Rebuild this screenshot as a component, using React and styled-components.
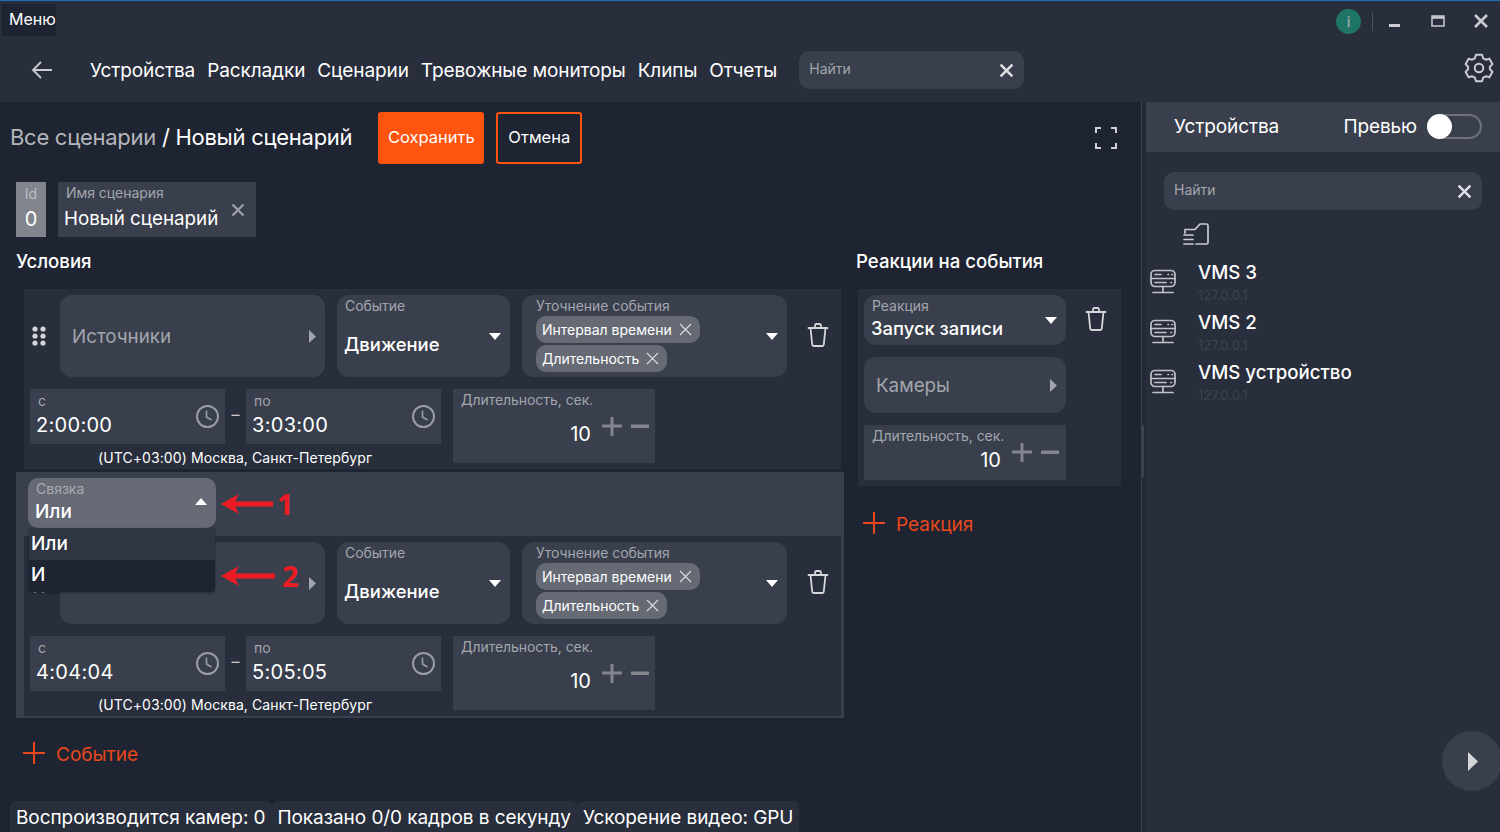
import React from "react";
import styled, { createGlobalStyle } from "styled-components";

const GlobalStyle = createGlobalStyle`
  html, body {
    margin: 0;
    padding: 0;
    height: 100%;
    overflow: hidden;
    background: #1e2431;
  }
  * {
    box-sizing: border-box;
  }
  body {
    font-family: "Inter", "Liberation Sans", sans-serif;
    color: #fff;
  }
`;

const Page = styled.div`
  width: 1500px;
  height: 832px;
  display: flex;
  flex-direction: column;
  overflow: hidden;
  background: #1e2431;
`;

const TopBar = styled.header`
  height: 102px;
  flex: none;
  background: #282e3b;
  border-top: 1px solid #1b6fb5;
  display: flex;
  flex-direction: column;
`;

const TitleRow = styled.div`
  height: 35px;
  padding: 3px 0 0 2px;
  display: flex;
  align-items: flex-start;
  justify-content: space-between;
`;

const MenuButton = styled.div`
  width: 54px;
  height: 32px;
  background: #1e2431;
  font-size: 16px;
  line-height: 30px;
  padding-left: 7px;
`;

const WindowControls = styled.div`
  display: flex;
  align-items: center;
  height: 26px;
  margin-top: 4px;
  padding-right: 12px;
`;

const InfoBadge = styled.div`
  width: 25px;
  height: 25px;
  border-radius: 50%;
  background: #1f7468;
  color: #9aa6a8;
  font-size: 14px;
  font-weight: 600;
  text-align: center;
  line-height: 25px;
`;

const ControlSep = styled.div`
  width: 1px;
  height: 19px;
  background: #4c525e;
  margin: 0 15px 0 11px;
`;

const WinIcon = styled.svg`
  width: 14px;
  height: 14px;
  display: block;
  margin-left: ${p => p.$gap || 0}px;
  color: #c9cbd0;
`;

const NavRow = styled.nav`
  flex: 1;
  display: flex;
  align-items: center;
  padding: 2px 5px 0 30px;
`;

const BackIcon = styled.svg`
  width: 24px;
  height: 24px;
  color: #c9ccd2;
  margin-right: 36px;
`;

const NavLink = styled.a`
  font-size: 19px;
  letter-spacing: -0.1px;
  margin-right: 12px;
  color: #fff;
  white-space: nowrap;
`;

const SearchBox = styled.div`
  height: 38px;
  width: ${p => p.$width}px;
  flex: none;
  background: #393f4c;
  border-radius: 10px;
  display: flex;
  align-items: center;
  justify-content: space-between;
  padding: 0 10px;
  font-size: 14px;
  color: #a3a6ad;
  margin-left: ${p => p.$left || 0}px;
`;

const SearchLabel = styled.span`
  margin-bottom: 4px;
`;

const CrossIcon = styled.svg`
  width: ${p => p.$size || 14}px;
  height: ${p => p.$size || 14}px;
  flex: none;
  color: ${p => p.$color || "#dcdee2"};
`;

const GearIcon = styled.svg`
  width: 32px;
  height: 32px;
  margin: -4px 0 0 auto;
  color: #c9ccd2;
`;

const Body = styled.div`
  flex: 1;
  display: flex;
  min-height: 0;
`;

const Main = styled.main`
  width: 1141px;
  flex: none;
  display: flex;
  flex-direction: column;
  position: relative;
`;

const Splitter = styled.div`
  width: 5px;
  flex: none;
  background: #232936;
  border-left: 1px solid #3c4250;
  position: relative;
`;

const SplitterGrip = styled.div`
  position: absolute;
  left: 0;
  top: 323px;
  width: 2px;
  height: 52px;
  background: #3c4250;
`;

const HeaderRow = styled.div`
  height: 52px;
  margin-top: 10px;
  padding: 0 24px 0 10px;
  display: flex;
  align-items: center;
  flex: none;
`;

const Crumbs = styled.div`
  font-size: 22px;
  letter-spacing: -0.28px;
  color: #fff;
  margin-right: 26px;
  padding-bottom: 2px;
  white-space: nowrap;
`;

const CrumbMuted = styled.span`
  color: #b4b6bb;
`;

const Button = styled.button`
  height: 52px;
  border-radius: 3px;
  font-family: inherit;
  font-size: 16.5px;
  color: #fff;
  padding: 0 0 2px;
  width: ${p => p.$width}px;
  margin-right: 12px;
  background: ${p => (p.$primary ? "#ff5310" : "transparent")};
  border: ${p => (p.$primary ? "none" : "2px solid #ff5310")};
`;

const ExpandIcon = styled.svg`
  width: 22px;
  height: 22px;
  margin: 0 0 0 auto;
  color: #d0d2d6;
`;

const NameRow = styled.div`
  display: flex;
  gap: 12px;
  padding-left: 16px;
  margin-top: 18px;
  height: 55px;
  flex: none;
`;

const IdBox = styled.div`
  width: 30px;
  background: #82858d;
  text-align: center;
`;

const IdLabel = styled.div`
  font-size: 14px;
  color: #bcbec3;
  margin-top: 3px;
  line-height: 17px;
`;

const IdValue = styled.div`
  font-size: 20px;
  line-height: 24px;
  margin-top: 5px;
`;

const NameBox = styled.div`
  width: 198px;
  background: #393f4c;
  padding: 2px 8px 0 6px;
  position: relative;
`;

const SmallLabel = styled.div`
  font-size: 14px;
  line-height: 17px;
  letter-spacing: -0.05px;
  color: #a3a6ad;
  white-space: nowrap;
  padding-left: ${p => p.$left || 0}px;
`;

const NameValue = styled.div`
  font-size: 18.8px;
  line-height: 24px;
  margin-top: 6px;
  white-space: nowrap;
`;

const NameClear = styled.div`
  position: absolute;
  right: 11px;
  top: 21px;
  display: flex;
`;

const Columns = styled.div`
  display: flex;
  padding-left: 16px;
  margin-top: 12px;
`;

const ConditionsColumn = styled.section`
  width: 828px;
  flex: none;
`;

const ReactionsColumn = styled.section`
  width: 265px;
  margin-left: 12px;
  flex: none;
`;

const SectionTitle = styled.h2`
  margin: 0;
  font-size: 18.6px;
  line-height: 24px;
  font-weight: 500;
  height: 40px;
`;

const Card = styled.div`
  width: 817px;
  height: ${p => p.$height}px;
  margin-left: 8px;
  background: #282e3b;
  padding: 6px 0 0 6px;
`;

const CardRow = styled.div`
  display: flex;
  align-items: flex-start;
`;

const Handle = styled.div`
  width: 30px;
  height: 82px;
  flex: none;
  display: flex;
  align-items: center;
  padding-left: 2px;
`;

const HandleIcon = styled.svg`
  width: 14px;
  height: 20px;
  color: #d4d6da;
`;

const LinkField = styled.div`
  width: ${p => p.$width}px;
  height: ${p => p.$height}px;
  margin-top: ${p => p.$top || 0}px;
  flex: none;
  background: #393f4c;
  border-radius: 12px;
  color: #a3a6ad;
  font-size: 18.8px;
  display: flex;
  align-items: center;
  justify-content: space-between;
  padding: 0 9px 0 12px;
`;

const Caret = styled.svg`
  width: 12px;
  height: ${p => (p.$side ? 13 : 7)}px;
  flex: none;
  color: ${p => (p.$side ? "#a3a6ad" : "#fff")};
`;

const SelectField = styled.div`
  width: ${p => p.$width}px;
  height: ${p => p.$height}px;
  margin-left: ${p => p.$left || 0}px;
  flex: none;
  background: #393f4c;
  border-radius: 12px;
  position: relative;
  padding: 2px 8px 0 8px;
`;

const SelectValue = styled.div`
  font-size: 18.4px;
  font-weight: 500;
  line-height: 24px;
  margin: ${p => p.$top || 0}px 0 0 -1px;
  white-space: nowrap;
`;

const FieldCaret = styled.div`
  position: absolute;
  right: ${p => p.$right || 9}px;
  top: ${p => p.$top}px;
  display: flex;
`;

const ChipList = styled.div`
  display: flex;
  flex-direction: column;
  align-items: flex-start;
  gap: 2px;
  margin-top: 2px;
  padding-left: 6px;
`;

const Chip = styled.div`
  height: 27px;
  border-radius: 10px;
  background: #666a75;
  font-size: 14px;
  display: flex;
  align-items: center;
  gap: 7px;
  padding: 0 8px 0 6px;
  white-space: nowrap;
`;

const TrashIcon = styled.svg`
  width: 24px;
  height: 26px;
  flex: none;
  color: #d4d6da;
  margin: ${p => p.$margin};
`;

const TimeRow = styled.div`
  display: flex;
  align-items: flex-start;
  margin-top: 12px;
  position: relative;
`;

const TimeField = styled.div`
  width: 195px;
  height: 55px;
  flex: none;
  background: #393f4c;
  position: relative;
  padding: 3px 0 0 8px;
`;

const TimeValue = styled.div`
  font-size: 20px;
  letter-spacing: 0.3px;
  line-height: 24px;
  margin: 4px 0 0 -2px;
`;

const ClockIcon = styled.svg`
  position: absolute;
  right: 5px;
  top: 15px;
  width: 25px;
  height: 25px;
  color: #9a9da4;
`;

const Dash = styled.div`
  width: 21px;
  flex: none;
  text-align: center;
  font-size: 16px;
  line-height: 50px;
  color: #c9cbd0;
`;

const Timezone = styled.div`
  position: absolute;
  left: 68px;
  top: 59px;
  font-size: 14px;
  line-height: 20px;
  letter-spacing: 0.09px;
  white-space: nowrap;
`;

const DurationField = styled.div`
  width: ${p => p.$width}px;
  height: ${p => p.$height}px;
  margin-left: ${p => p.$left || 0}px;
  margin-top: ${p => p.$top || 0}px;
  flex: none;
  background: #393f4c;
  padding: 2px 0 0 8px;
  position: relative;
`;

const DurationValue = styled.div`
  display: flex;
  align-items: flex-start;
  justify-content: flex-end;
  position: absolute;
  right: ${p => p.$right || 0}px;
  top: ${p => p.$top}px;
`;

const DurationNumber = styled.span`
  font-size: 20px;
  line-height: 24px;
  margin: 1px 11px 0 0;
`;

const StepIcon = styled.svg`
  width: 20px;
  height: 20px;
  color: #82858d;
  margin-left: ${p => p.$gap || 0}px;
  margin-top: -5px;
`;

const LinkGroup = styled.div`
  width: 828px;
  height: 246px;
  margin-top: 3px;
  background: #393f4c;
  padding-top: 6px;
  position: relative;
`;

const LinkSelect = styled.div`
  width: 188px;
  height: 50px;
  margin: 0 0 8px 12px;
  background: #666a75;
  border-radius: 10px;
  padding: 2px 8px;
  position: relative;
`;

const LinkLabel = styled.div`
  font-size: 14px;
  line-height: 18px;
  color: #a9abb1;
`;

const LinkValue = styled.div`
  font-size: 19px;
  font-weight: 500;
  line-height: 24px;
  margin: 2px 0 0 -1px;
`;

const Dropdown = styled.ul`
  position: absolute;
  left: 13px;
  top: 56px;
  width: 186px;
  margin: 0;
  padding: 2px 0 0;
  list-style: none;
  background: #2f3542;
  z-index: 5;
  box-shadow: 0 1px 3px rgba(0, 0, 0, 0.35);
  border-radius: 0 0 4px 4px;
`;

const DropdownItem = styled.li`
  height: ${p => (p.$active ? 32 : 30)}px;
  font-size: 19px;
  font-weight: 500;
  line-height: ${p => (p.$active ? 30 : 28)}px;
  padding-left: 2px;
  background: ${p => (p.$active ? "#1e2431" : "#2f3542")};
  border-radius: ${p => (p.$active ? "0 0 4px 4px" : 0)};
`;

const Callout = styled.div`
  position: absolute;
  left: ${p => p.$left}px;
  top: ${p => p.$top}px;
  display: flex;
  align-items: center;
  gap: ${p => p.$gap}px;
  z-index: 6;
  color: #ed1c24;
  font-family: "Open Sans", sans-serif;
  font-size: 29px;
  font-weight: 700;
  line-height: 30px;
`;

const AddRow = styled.div`
  display: flex;
  align-items: center;
  margin: ${p => p.$margin};
  color: #e8481c;
  font-size: 19px;
  gap: 10px;
`;

const AddLabel = styled.span`
  padding-top: 3px;
`;

const PlusIcon = styled.svg`
  width: 24px;
  height: 24px;
  color: #e8481c;
`;

const ReactionCard = styled.div`
  width: 263px;
  height: 197px;
  margin-left: 2px;
  background: #282e3b;
  padding: 6px;
`;

const StatusBar = styled.footer`
  position: absolute;
  left: 10px;
  bottom: 0;
  display: flex;
`;

const StatusItem = styled.div`
  height: 31px;
  background: #282e3b;
  border-radius: 6px 6px 0 0;
  font-size: 19px;
  line-height: 33px;
  padding: 0 6px;
  white-space: nowrap;
  letter-spacing: -0.07px;
`;

const Side = styled.aside`
  flex: 1;
  background: #282e3b;
  position: relative;
  display: flex;
  flex-direction: column;
`;

const SideHeader = styled.div`
  height: 50px;
  flex: none;
  background: #393f4c;
  display: flex;
  align-items: center;
  padding: 0 18px 2px 28px;
  font-size: 19px;
  letter-spacing: -0.1px;
`;

const PreviewLabel = styled.span`
  margin-left: auto;
  margin-right: 10px;
`;

const Toggle = styled.div`
  width: 55px;
  height: 25px;
  border: 2px solid #6d7079;
  border-radius: 13px;
  position: relative;
`;

const ToggleThumb = styled.div`
  position: absolute;
  left: -2px;
  top: -2px;
  width: 25px;
  height: 25px;
  border-radius: 50%;
  background: #fff;
`;

const SideSearch = styled.div`
  padding: 20px 18px 0 18px;
  flex: none;
`;

const FolderIcon = styled.svg`
  width: 28px;
  height: 26px;
  margin: 12px 0 0 36px;
  color: #c9ccd2;
  flex: none;
`;

const DeviceList = styled.ul`
  list-style: none;
  margin: 13px 0 0;
  padding: 0 0 0 3px;
`;

const DeviceRow = styled.li`
  height: 50px;
  display: flex;
  align-items: flex-start;
`;

const ServerIcon = styled.svg`
  width: 28px;
  height: 26px;
  flex: none;
  margin: 8px 21px 0 0;
  color: #bfc2c8;
`;

const DeviceName = styled.div`
  font-size: 18.7px;
  line-height: 24px;
  font-weight: 500;
`;

const DeviceIp = styled.div`
  font-size: 13px;
  line-height: 20px;
  color: #3d4350;
`;

const PlayButton = styled.div`
  position: absolute;
  left: 296px;
  top: 629px;
  width: 60px;
  height: 60px;
  border-radius: 50%;
  background: #393f4c;
  display: flex;
  align-items: center;
  padding-left: 26px;
`;

const Clear = ({ size, color }) => (
  <CrossIcon $size={size} $color={color} viewBox="0 0 14 14" fill="none" stroke="currentColor" strokeWidth="2.4">
    <path d="M1.5 1.5l11 11M12.5 1.5l-11 11" />
  </CrossIcon>
);

const DownCaret = ({ up }) => (
  <Caret viewBox="0 0 12 7" fill="currentColor">
    <path d={up ? "M6 0l6 7H0z" : "M0 0h12L6 7z"} />
  </Caret>
);

const SideCaret = () => (
  <Caret $side viewBox="0 0 12 13" fill="currentColor">
    <path d="M5 0l7 6.500-7 6.500z" />
  </Caret>
);

const Trash = ({ margin }) => (
  <TrashIcon $margin={margin} viewBox="0 0 24 26" fill="none" stroke="currentColor" strokeWidth="1.8" strokeLinecap="round" strokeLinejoin="round">
    <path d="M2.5 6h19M9 5.5V3.5a1.5 1.5 0 0 1 1.5-1.5h3A1.5 1.5 0 0 1 15 3.5v2M4.5 6l1.7 16.3a1.8 1.8 0 0 0 1.8 1.7h8a1.8 1.8 0 0 0 1.8-1.7L19.500 6" />
  </TrashIcon>
);

const Clock = () => (
  <ClockIcon viewBox="0 0 25 25" fill="none" stroke="currentColor" strokeWidth="2">
    <circle cx="12.5" cy="12.5" r="10.5" />
    <path d="M11.500 6.500v6.500l5 3" strokeWidth="1.6" />
  </ClockIcon>
);

const Steppers = () => (
  <>
    <StepIcon viewBox="0 0 20 20" fill="currentColor">
      <path d="M8.500 1h3v7.500H20v3h-8.500V20h-3v-8.500H0v-3h8.500z" />
    </StepIcon>
    <StepIcon $gap={8} viewBox="0 0 20 20" fill="currentColor">
      <path d="M1 8.500h18v3.500H1z" />
    </StepIcon>
  </>
);

const Plus = () => (
  <PlusIcon viewBox="0 0 24 24" fill="none" stroke="currentColor" strokeWidth="2">
    <path d="M12 1v22M1 12h22" />
  </PlusIcon>
);

const ChipClose = () => (
  <CrossIcon $size={13} viewBox="0 0 13 13" fill="none" stroke="currentColor" strokeWidth="1.1">
    <path d="M1 1l11 11M12 1L1 12" />
  </CrossIcon>
);

const Server = () => (
  <ServerIcon viewBox="0 0 28 26" fill="none" stroke="currentColor" strokeWidth="1.7" strokeLinecap="round">
    <rect x="2" y="1.500" width="24" height="16" rx="4" />
    <path d="M2 9.500h24M6 5.500h6M6 13.500h11M19 5.500h.5M23 5.500h.5M22 13.500h.5M14 17.500v5M4 23.500h20" />
  </ServerIcon>
);

const Arrow = ({ width }) => (
  <svg width={width} height="20" viewBox={`0 0 ${width} 20`} fill="#ed1c24">
    <path d={`M0 10L18 0l-4 7.500h${width - 14}v5H14l4 7.500z`} />
  </svg>
);

const ConditionCard = ({ from, to }) => (
  <Card $height={180}>
    <CardRow>
      <Handle>
        <HandleIcon viewBox="0 0 14 20" fill="currentColor">
          <circle cx="3" cy="3" r="2.600" />
          <circle cx="11" cy="3" r="2.600" />
          <circle cx="3" cy="10" r="2.600" />
          <circle cx="11" cy="10" r="2.600" />
          <circle cx="3" cy="17" r="2.600" />
          <circle cx="11" cy="17" r="2.600" />
        </HandleIcon>
      </Handle>
      <LinkField $width={265} $height={82}>
        Источники
        <SideCaret />
      </LinkField>
      <SelectField $width={173} $height={82} $left={12}>
        <SmallLabel>Событие</SmallLabel>
        <SelectValue $top={18}>Движение</SelectValue>
        <FieldCaret $top={38}>
          <DownCaret />
        </FieldCaret>
      </SelectField>
      <SelectField $width={265} $height={82} $left={12}>
        <SmallLabel $left={6}>Уточнение события</SmallLabel>
        <ChipList>
          <Chip>
            Интервал времени
            <ChipClose />
          </Chip>
          <Chip>
            Длительность
            <ChipClose />
          </Chip>
        </ChipList>
        <FieldCaret $top={38}>
          <DownCaret />
        </FieldCaret>
      </SelectField>
      <Trash margin="27px 0 0 19px" />
    </CardRow>
    <TimeRow>
      <TimeField>
        <SmallLabel>с</SmallLabel>
        <TimeValue>{from}</TimeValue>
        <Clock />
      </TimeField>
      <Dash>–</Dash>
      <TimeField>
        <SmallLabel>по</SmallLabel>
        <TimeValue>{to}</TimeValue>
        <Clock />
      </TimeField>
      <DurationField $width={202} $height={74} $left={12}>
        <SmallLabel>Длительность, сек.</SmallLabel>
        <DurationValue $right={5} $top={32}>
          <DurationNumber>10</DurationNumber>
          <Steppers />
        </DurationValue>
      </DurationField>
      <Timezone>(UTC+03:00) Москва, Санкт-Петербург</Timezone>
    </TimeRow>
  </Card>
);

const App = () => (
  <Page>
    <GlobalStyle />
    <TopBar>
      <TitleRow>
        <MenuButton>Меню</MenuButton>
        <WindowControls>
          <InfoBadge>i</InfoBadge>
          <ControlSep />
          <WinIcon viewBox="0 0 14 14" fill="currentColor">
            <path d="M1 10h11v3H1z" />
          </WinIcon>
          <WinIcon $gap={29} viewBox="0 0 14 14" fill="none" stroke="currentColor" strokeWidth="1.500">
            <rect x="1" y="2" width="12" height="10" />
            <path d="M1 3.500h12" strokeWidth="2.500" />
          </WinIcon>
          <WinIcon $gap={29} viewBox="0 0 14 14" fill="none" stroke="currentColor" strokeWidth="2.600">
            <path d="M1 1l12 12M13 1L1 13" />
          </WinIcon>
        </WindowControls>
      </TitleRow>
      <NavRow>
        <BackIcon viewBox="0 0 24 24" fill="none" stroke="currentColor" strokeWidth="1.800">
          <path d="M22 12H3M11 4l-8 8 8 8" />
        </BackIcon>
        <NavLink>Устройства</NavLink>
        <NavLink>Раскладки</NavLink>
        <NavLink>Сценарии</NavLink>
        <NavLink>Тревожные мониторы</NavLink>
        <NavLink>Клипы</NavLink>
        <NavLink>Отчеты</NavLink>
        <SearchBox $width={225} $left={10}>
          <SearchLabel>Найти</SearchLabel>
          <Clear size={15} />
        </SearchBox>
        <GearIcon viewBox="0 0 24 24" fill="none" stroke="currentColor" strokeWidth="1.500" strokeLinejoin="round">
          <path d="M9.700 2h4.600l.8 2.700 2 1.100 2.700-.7 2.300 4-2 2 .1 1.800 1.900 2-2.300 4-2.700-.7-2 1.100-.8 2.700H9.700l-.8-2.700-2-1.100-2.700.7-2.300-4 2-2-.1-1.800-1.900-2 2.300-4 2.700.7 2-1.100z" />
          <circle cx="12" cy="12" r="3.200" />
        </GearIcon>
      </NavRow>
    </TopBar>
    <Body>
      <Main>
        <HeaderRow>
          <Crumbs>
            <CrumbMuted>Все сценарии</CrumbMuted> / Новый сценарий
          </Crumbs>
          <Button $primary $width={106}>Сохранить</Button>
          <Button $width={86}>Отмена</Button>
          <ExpandIcon viewBox="0 0 22 22" fill="none" stroke="currentColor" strokeWidth="2">
            <path d="M1 6V1h5M16 1h5v5M21 16v5h-5M6 21H1v-5" />
          </ExpandIcon>
        </HeaderRow>
        <NameRow>
          <IdBox>
            <IdLabel>Id</IdLabel>
            <IdValue>0</IdValue>
          </IdBox>
          <NameBox>
            <SmallLabel $left={2}>Имя сценария</SmallLabel>
            <NameValue>Новый сценарий</NameValue>
            <NameClear>
              <Clear size={14} color="#9a9da4" />
            </NameClear>
          </NameBox>
        </NameRow>
        <Columns>
          <ConditionsColumn>
            <SectionTitle>Условия</SectionTitle>
            <ConditionCard from="2:00:00" to="3:03:00" />
            <LinkGroup>
              <LinkSelect>
                <LinkLabel>Связка</LinkLabel>
                <LinkValue>Или</LinkValue>
                <FieldCaret $top={20}>
                  <DownCaret up />
                </FieldCaret>
              </LinkSelect>
              <ConditionCard from="4:04:04" to="5:05:05" />
              <Dropdown>
                <DropdownItem>Или</DropdownItem>
                <DropdownItem $active>И</DropdownItem>
              </Dropdown>
              <Callout $left={205} $top={17} $gap={4}>
                <Arrow width={52} />1
              </Callout>
              <Callout $left={205} $top={89} $gap={7}>
                <Arrow width={54} />2
              </Callout>
            </LinkGroup>
            <AddRow $margin="22px 0 0 6px">
              <Plus />
              <AddLabel>Событие</AddLabel>
            </AddRow>
          </ConditionsColumn>
          <ReactionsColumn>
            <SectionTitle>Реакции на события</SectionTitle>
            <ReactionCard>
              <CardRow>
                <SelectField $width={202} $height={50}>
                  <SmallLabel>Реакция</SmallLabel>
                  <SelectValue $top={2}>Запуск записи</SelectValue>
                  <FieldCaret $top={22}>
                    <DownCaret />
                  </FieldCaret>
                </SelectField>
                <Trash margin="11px 0 0 18px" />
              </CardRow>
              <LinkField $width={202} $height={56} $top={12}>
                Камеры
                <SideCaret />
              </LinkField>
              <DurationField $width={202} $height={55} $top={12}>
                <SmallLabel>Длительность, сек.</SmallLabel>
                <DurationValue $right={6} $top={22}>
                  <DurationNumber>10</DurationNumber>
                  <Steppers />
                </DurationValue>
              </DurationField>
            </ReactionCard>
            <AddRow $margin="24px 0 0 6px">
              <Plus />
              <AddLabel>Реакция</AddLabel>
            </AddRow>
          </ReactionsColumn>
        </Columns>
        <StatusBar>
          <StatusItem>Воспроизводится камер: 0</StatusItem>
          <StatusItem>Показано 0/0 кадров в секунду</StatusItem>
          <StatusItem>Ускорение видео: GPU</StatusItem>
        </StatusBar>
      </Main>
      <Splitter>
        <SplitterGrip />
      </Splitter>
      <Side>
        <SideHeader>
          Устройства
          <PreviewLabel>Превью</PreviewLabel>
          <Toggle>
            <ToggleThumb />
          </Toggle>
        </SideHeader>
        <SideSearch>
          <SearchBox $width={318}>
            <SearchLabel>Найти</SearchLabel>
            <Clear size={15} />
          </SearchBox>
        </SideSearch>
        <FolderIcon viewBox="0 0 28 26" fill="none" stroke="currentColor" strokeWidth="1.700" strokeLinecap="round" strokeLinejoin="round">
          <path d="M3 11V7.500h10L18 2h6.500a1.500 1.500 0 0 1 1.500 1.500v17a1.500 1.500 0 0 1-1.500 1.500H14" />
          <path d="M2 13h9M2 17.500h9M2 22h9" />
        </FolderIcon>
        <DeviceList>
          <DeviceRow>
            <Server />
            <div>
              <DeviceName>VMS 3</DeviceName>
              <DeviceIp>127.0.0.1</DeviceIp>
            </div>
          </DeviceRow>
          <DeviceRow>
            <Server />
            <div>
              <DeviceName>VMS 2</DeviceName>
              <DeviceIp>127.0.0.1</DeviceIp>
            </div>
          </DeviceRow>
          <DeviceRow>
            <Server />
            <div>
              <DeviceName>VMS устройство</DeviceName>
              <DeviceIp>127.0.0.1</DeviceIp>
            </div>
          </DeviceRow>
        </DeviceList>
        <PlayButton>
          <svg width="10" height="19" viewBox="0 0 10 19" fill="#d4d6da">
            <path d="M0 0l10 9.500L0 19z" />
          </svg>
        </PlayButton>
      </Side>
    </Body>
  </Page>
);

export default App;
